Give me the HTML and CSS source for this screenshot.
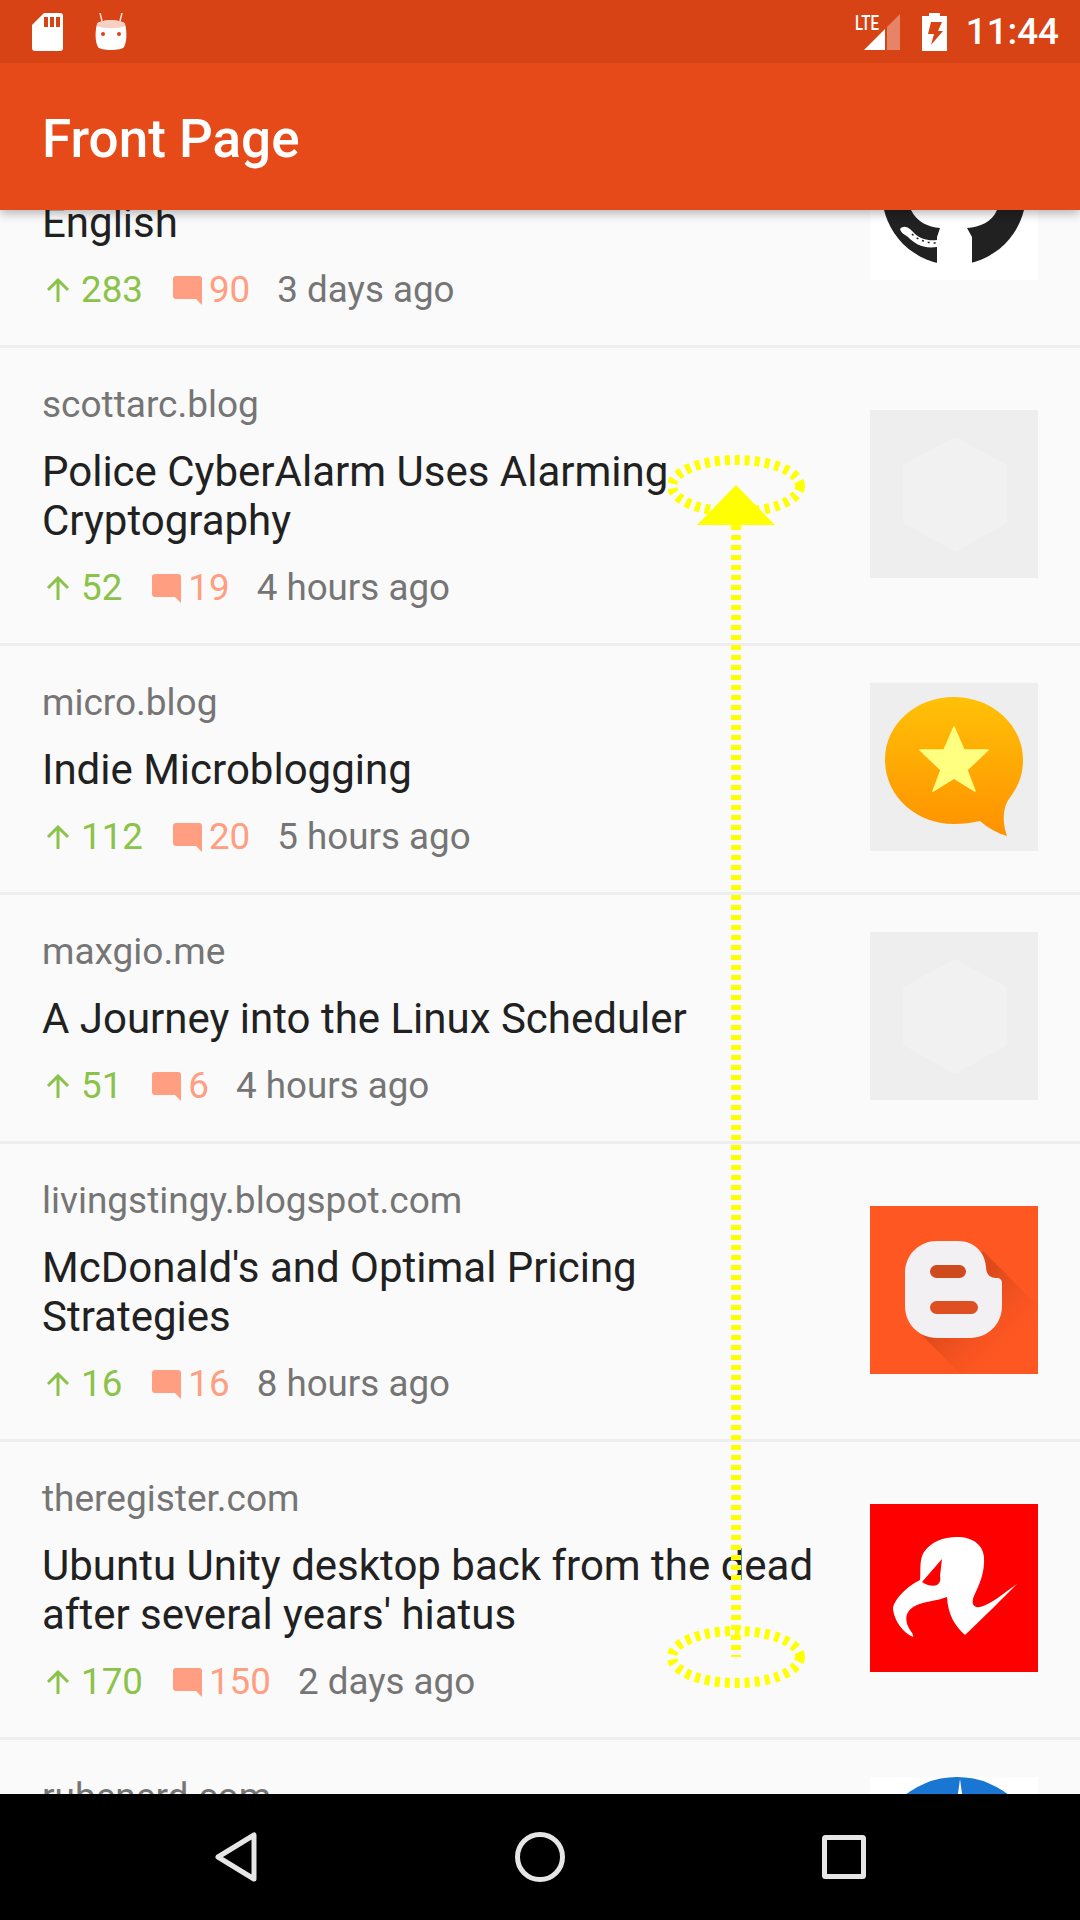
FILE: index.html
```html
<!DOCTYPE html>
<html lang="en">
<head>
  <meta charset="UTF-8">
  <meta name="viewport" content="width=device-width, initial-scale=1.0">
  <title>Front Page</title>
  <link rel="stylesheet" href="styles.css">
</head>
<body>
  <svg class="defs" width="0" height="0">
    <symbol id="up" viewBox="0 0 24 24">
      <path d="M12 24V2M2 12L12 2l10 10" fill="none" stroke="#8bc34a" stroke-width="3"/>
    </symbol>
    <symbol id="comment" viewBox="0 0 29 29">
      <path d="M3 0H26a3 3 0 0 1 3 3V29L23 23H3a3 3 0 0 1-3-3V3a3 3 0 0 1 3-3z" fill="#ff9e80"/>
    </symbol>
    <symbol id="hex" viewBox="0 0 168 168">
      <rect width="168" height="168" fill="#eeeeee"/>
      <path d="M85 27l52 28v58l-52 29-52-29V55z" fill="#f1f1f1"/>
    </symbol>
  </svg>

  <div class="page">
    <div class="status">
      <svg class="sd" width="32" height="38" viewBox="0 0 32 38">
        <path d="M12 0H28a3 3 0 0 1 3 3V35a3 3 0 0 1-3 3H3a3 3 0 0 1-3-3V12z" fill="#fff"/>
        <path d="M12 4h4v10h-4zM18 4h4v10h-4zM24 4h4v10h-4z" fill="#d84315"/>
      </svg>
      <svg class="egg" width="32" height="38" viewBox="0 0 32 38">
        <path d="M7 8L5 0M25 8l2-8" stroke="#fff" stroke-width="1.5" opacity=".85"/>
        <path d="M2 11c3-5 25-5 28 0 2 7 2 18-1 23-2 4-24 4-26 0-3-5-3-16-1-23z" fill="#fff"/>
        <path d="M2 11c3-5 25-5 28 0v2c-6 3-22 3-28 0z" fill="#f6d0c2"/>
        <circle cx="8" cy="21" r="2" fill="#d84315"/>
        <circle cx="24" cy="21" r="2" fill="#d84315"/>
      </svg>
      <div class="status-right">
        <svg class="signal" width="46" height="38" viewBox="0 0 46 38">
          <text class="lte" x="1" y="17" textLength="24" lengthAdjust="spacingAndGlyphs">LTE</text>
          <path d="M10 37L31 16V37z" fill="#fff"/>
          <path d="M33 14L46 1V37H33z" fill="#fff" opacity=".35"/>
        </svg>
        <svg class="battery" width="25" height="38" viewBox="0 0 25 38">
          <path d="M7 0H18V3H25V38H0V3H7z" fill="#fff"/>
          <path d="M9 9H20L16 18H21L9 32L12 21H6z" fill="#d84315"/>
        </svg>
        <span class="clock">11:44</span>
      </div>
    </div>

    <div class="toolbar">Front Page</div>

    <div class="list">
      <div class="row row-cut">
        <div class="info">
          <div class="headline">English</div>
          <div class="meta">
            <span class="score"><svg class="arrow"><use href="#up"/></svg>283</span>
            <span class="comments"><svg class="bubble"><use href="#comment"/></svg>90</span>
            <span>3 days ago</span>
          </div>
        </div>
        <svg class="thumb" viewBox="0 0 168 168">
          <rect width="168" height="168" fill="#fff"/>
          <circle cx="84" cy="81" r="72" fill="#212121"/>
          <path d="M41 40V98C47 110 58 115 70 116L67 125V168H102V125L97 116C110 115 122 110 127 98V40z" fill="#fff"/>
          <path d="M30 117C34 112 40 116 44 121C50 127 58 129 67 128V135C52 137 44 131 38 125C34 122 31 121 30 117z" fill="#fff"/>
          <path d="M42 122C48 128 56 131 66 131" fill="none" stroke="#212121" stroke-width="1.5" stroke-dasharray="2 4"/>
        </svg>
      </div>

      <div class="row">
        <div class="info">
          <div class="domain">scottarc.blog</div>
          <div class="headline">Police CyberAlarm Uses Alarming<br>Cryptography</div>
          <div class="meta">
            <span class="score"><svg class="arrow"><use href="#up"/></svg>52</span>
            <span class="comments"><svg class="bubble"><use href="#comment"/></svg>19</span>
            <span>4 hours ago</span>
          </div>
        </div>
        <svg class="thumb"><use href="#hex"/></svg>
      </div>

      <div class="row">
        <div class="info">
          <div class="domain">micro.blog</div>
          <div class="headline">Indie Microblogging</div>
          <div class="meta">
            <span class="score"><svg class="arrow"><use href="#up"/></svg>112</span>
            <span class="comments"><svg class="bubble"><use href="#comment"/></svg>20</span>
            <span>5 hours ago</span>
          </div>
        </div>
        <svg class="thumb" viewBox="0 0 168 168">
          <defs>
            <linearGradient id="gold" x1="0" y1="0" x2="0" y2="1">
              <stop offset="0" stop-color="#ffc107"/>
              <stop offset="1" stop-color="#ff9100"/>
            </linearGradient>
          </defs>
          <rect width="168" height="168" fill="#eeeeee"/>
          <path d="M84 14c38 0 69 28 69 63 0 17-6 28-14 39-6 8-7 24 -2 37-10-3-19-8-27-15-9 2-17 3-26 3-38 0-69-28-69-64s31-63 69-63z" fill="url(#gold)"/>
          <path d="M84 44l10 23h24L97 87l8 21-21-13-21 13 8-21L50 67h24z" fill="#ffff80" stroke="#ffff80" stroke-width="1.5" stroke-linejoin="round"/>
        </svg>
      </div>

      <div class="row">
        <div class="info">
          <div class="domain">maxgio.me</div>
          <div class="headline">A Journey into the Linux Scheduler</div>
          <div class="meta">
            <span class="score"><svg class="arrow"><use href="#up"/></svg>51</span>
            <span class="comments"><svg class="bubble"><use href="#comment"/></svg>6</span>
            <span>4 hours ago</span>
          </div>
        </div>
        <svg class="thumb"><use href="#hex"/></svg>
      </div>

      <div class="row">
        <div class="info">
          <div class="domain">livingstingy.blogspot.com</div>
          <div class="headline">McDonald's and Optimal Pricing<br>Strategies</div>
          <div class="meta">
            <span class="score"><svg class="arrow"><use href="#up"/></svg>16</span>
            <span class="comments"><svg class="bubble"><use href="#comment"/></svg>16</span>
            <span>8 hours ago</span>
          </div>
        </div>
        <svg class="thumb" viewBox="0 0 168 168">
          <defs>
            <linearGradient id="shade" x1="0" y1="0" x2="1" y2="1">
              <stop offset="0.4" stop-color="#b33a12" stop-opacity=".45"/>
              <stop offset="0.85" stop-color="#ff5722" stop-opacity="0"/>
            </linearGradient>
          </defs>
          <rect width="168" height="168" fill="#ff5722"/>
          <path d="M113 45L168 100V168H90L45 122z" fill="url(#shade)"/>
          <path d="M67 35H88c16 0 27 11 28 26 0 7 4 11 10 11h1c3 0 5 2 5 5v23c0 18-14 32-32 32H67c-18 0-32-14-32-32V67c0-18 14-32 32-32z" fill="#f2f0f2"/>
          <rect x="60" y="59" width="36" height="13" rx="6.5" fill="#cf4b1e"/>
          <rect x="60" y="95" width="48" height="13" rx="6.5" fill="#de5022"/>
        </svg>
      </div>

      <div class="row">
        <div class="info">
          <div class="domain">theregister.com</div>
          <div class="headline">Ubuntu Unity desktop back from the dead<br>after several years' hiatus</div>
          <div class="meta">
            <span class="score"><svg class="arrow"><use href="#up"/></svg>170</span>
            <span class="comments"><svg class="bubble"><use href="#comment"/></svg>150</span>
            <span>2 days ago</span>
          </div>
        </div>
        <svg class="thumb" viewBox="0 0 168 168">
          <rect width="168" height="168" fill="#ff0000"/>
          <path d="M87 33c16 0 26 8 27 20 1 16-5 28-10 39-3 7-1 12 6 11 10-2 24-14 37-23-14 14-34 34-52 51-10-9-17-20-18-38-10 4-22 4-32 9-8 4-12 12-5 24 2 3 4 5 3 7-10-4-19-17-20-28 0-7 12-22 27-29 1-10-1-20 4-28 7-10 19-15 33-15z" fill="#fff"/>
          <path d="M72 55L52 78c4 3 11 5 15 3 3-2 4-5 3-9z" fill="#ff0000"/>
        </svg>
      </div>

      <div class="row row-last">
        <div class="info">
          <div class="domain">rubenerd.com</div>
        </div>
        <svg class="thumb" viewBox="0 0 168 168">
          <rect width="168" height="168" fill="#fff"/>
          <circle cx="87" cy="84" r="84" fill="#1976d2"/>
          <path d="M90 2L82 60h16z" fill="#fff"/>
        </svg>
      </div>
    </div>

    <div class="navbar">
      <svg width="42" height="50" viewBox="0 0 42 50">
        <path d="M39 3V47L3 25z" fill="none" stroke="#e6e6e6" stroke-width="5" stroke-linejoin="round"/>
      </svg>
      <svg width="50" height="50" viewBox="0 0 50 50">
        <circle cx="25" cy="25" r="22.5" fill="none" stroke="#e6e6e6" stroke-width="5"/>
      </svg>
      <svg width="44" height="44" viewBox="0 0 44 44">
        <rect x="2.5" y="2.5" width="39" height="39" rx="1" fill="none" stroke="#e6e6e6" stroke-width="5"/>
      </svg>
    </div>

    <svg class="gesture" width="1080" height="1920" viewBox="0 0 1080 1920">
      <g fill="none" stroke="#ffff00" stroke-width="10">
        <ellipse cx="736" cy="486" rx="64" ry="26" stroke-dasharray="5 5"/>
        <ellipse cx="736" cy="1657" rx="64" ry="26" stroke-dasharray="5 5"/>
        <path d="M736 525V1657" stroke-dasharray="5 5"/>
      </g>
      <path d="M736 485L775 525H697z" fill="#ffff00"/>
    </svg>
  </div>
</body>
</html>
```

FILE: styles.css
```css
* {
  box-sizing: border-box;
}
body {
  margin: 0;
  font-family: Roboto, sans-serif;
  background-color: #fafafa;
}
.defs {
  position: absolute;
}
.page {
  position: relative;
  width: 1080px;
  height: 1920px;
  display: flex;
  flex-direction: column;
  overflow: hidden;
}

/* status bar */
.status {
  height: 63px;
  flex: none;
  background-color: #d84315;
  display: flex;
  align-items: center;
  padding: 0 21px 0 32px;
  position: relative;
  z-index: 3;
}
.egg {
  margin-left: 31px;
}
.status-right {
  margin-left: auto;
  display: flex;
  align-items: center;
}
.lte {
  fill: #fff;
  font-family: "Roboto", sans-serif;
  font-size: 20px;
  font-weight: 500;
}
.battery {
  margin-left: 22px;
}
.clock {
  margin-left: 19px;
  color: #fff;
  font-size: 36.75px;
  font-weight: 500;
}

/* app bar */
.toolbar {
  height: 147px;
  flex: none;
  background-color: #e64a19;
  color: #fff;
  font-size: 53px;
  font-weight: 500;
  line-height: 142px;
  padding: 5px 0 0 42px;
  position: relative;
  z-index: 2;
  box-shadow: 0 3px 10px rgba(0, 0, 0, 0.3);
}

/* story list */
.list {
  flex: 1;
  min-height: 0;
  overflow: hidden;
}
.row {
  display: flex;
  align-items: center;
  justify-content: space-between;
  padding: 0 42px;
  border-bottom: 3px solid #eeeeee;
}
.row-cut {
  height: 138px;
  align-items: flex-end;
}
.row-cut .thumb {
  margin-bottom: 65px;
}
.row-last {
  min-height: 246px;
  border-bottom: none;
}
.row-last .info {
  align-self: flex-start;
}
.info {
  padding: 36px 0 34px;
}
.domain {
  color: #757575;
  font-size: 37px;
  line-height: 42px;
}
.headline {
  margin-top: 21px;
  color: #212121;
  font-size: 42px;
  line-height: 49px;
}
.row-cut .headline {
  margin-top: 0;
}
.meta {
  margin-top: 22px;
  display: flex;
  align-items: center;
  gap: 27px;
  color: #757575;
  font-size: 36.75px;
  line-height: 42px;
}
.score {
  display: flex;
  align-items: center;
  color: #8bc34a;
  margin-right: 3px;
}
.comments {
  display: flex;
  align-items: center;
  color: #ff9e80;
}
.arrow {
  width: 24px;
  height: 24px;
  margin: 0 11px 0 4px;
}
.bubble {
  width: 29px;
  height: 29px;
  margin-right: 7px;
}
.thumb {
  width: 168px;
  height: 168px;
  flex: none;
  margin-bottom: 4px;
}

/* nav bar */
.navbar {
  height: 126px;
  flex: none;
  background-color: #000;
  position: relative;
  z-index: 2;
  display: flex;
  align-items: center;
  padding-left: 215px;
}
.navbar svg:nth-child(2) {
  margin-left: 258px;
}
.navbar svg:nth-child(3) {
  margin-left: 257px;
}

/* the swipe gesture drawn over the screen */
.gesture {
  position: absolute;
  top: 0;
  left: 0;
  pointer-events: none;
}
```
